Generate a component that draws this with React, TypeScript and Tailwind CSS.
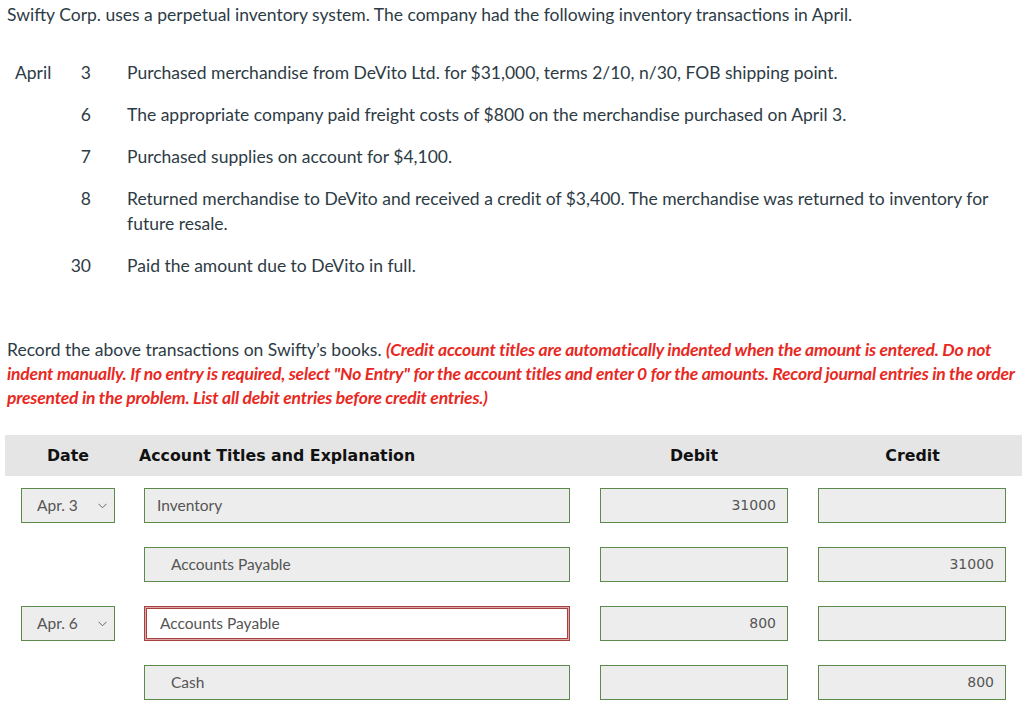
import React from 'react';

const transactions = [
  { day: '3', text: 'Purchased merchandise from DeVito Ltd. for $31,000, terms 2/10, n/30, FOB shipping point.' },
  { day: '6', text: 'The appropriate company paid freight costs of $800 on the merchandise purchased on April 3.' },
  { day: '7', text: 'Purchased supplies on account for $4,100.' },
  {
    day: '8',
    text: 'Returned merchandise to DeVito and received a credit of $3,400. The merchandise was returned to inventory for future resale.',
  },
  { day: '30', text: 'Paid the amount due to DeVito in full.' },
];

type Row = {
  date?: string;
  account: string;
  credit?: boolean;
  error?: boolean;
  debit: string;
  creditAmt: string;
};

const rows: Row[] = [
  { date: 'Apr. 3', account: 'Inventory', debit: '31000', creditAmt: '' },
  { account: 'Accounts Payable', credit: true, debit: '', creditAmt: '31000' },
  { date: 'Apr. 6', account: 'Accounts Payable', error: true, debit: '800', creditAmt: '' },
  { account: 'Cash', credit: true, debit: '', creditAmt: '800' },
];

const Chevron = () => (
  <svg width="9" height="6" viewBox="0 0 9 6" fill="none" stroke="#666" strokeWidth="1">
    <path d="M0.5 0.8 L4.5 4.8 L8.5 0.8" />
  </svg>
);

const AmountBox = ({ value }: { value: string }) => (
  <div className="h-[35px] border border-[#5b8a4c] bg-[#ededed] flex items-center justify-end pr-[11px] font-['DejaVu_Sans',sans-serif] text-[14px] text-[#555]">
    {value}
  </div>
);

export default function App() {
  return (
    <div className="w-[1024px] h-[709px] overflow-hidden bg-white font-['Lato',sans-serif] text-[17.5px] text-[#2d3b45]">
      <p className="pl-[7px] pt-[3px] leading-[24px]">
        Swifty Corp. uses a perpetual inventory system. The company had the following inventory transactions in April.
      </p>

      <div className="mt-[33px] flex flex-col gap-[17px] pr-[20px]">
        {transactions.map((t, i) => (
          <div key={t.day} className="flex leading-[25px]">
            <div className="w-[67px] pl-[15px] shrink-0">{i === 0 ? 'April' : ''}</div>
            <div className="w-[24px] text-right shrink-0">{t.day}</div>
            <div className="pl-[36px]">{t.text}</div>
          </div>
        ))}
      </div>

      <p className="mt-[60px] pl-[7px] pr-[2px] leading-[24px]">
        Record the above transactions on Swifty’s books.{' '}
        <span className="text-[#e8291f] font-bold italic tracking-[-0.2px]">
          (Credit account titles are automatically indented when the amount is entered. Do not indent manually. If no
          entry is required, select "No Entry" for the account titles and enter 0 for the amounts. Record journal
          entries in the order presented in the problem. List all debit entries before credit entries.)
        </span>
      </p>

      <div className="mt-[25px] ml-[5px] w-[1017px]">
        <div className="grid grid-cols-[126px_454px_218px_219px] h-[41px] items-center bg-[#e5e5e5] font-['DejaVu_Sans',sans-serif] font-bold text-[15.8px] text-[#111]">
          <div className="text-center">Date</div>
          <div className="pl-[8px]">Account Titles and Explanation</div>
          <div className="text-center">Debit</div>
          <div className="text-center">Credit</div>
        </div>

        {rows.map((r, i) => (
          <div key={i} className="grid grid-cols-[126px_454px_218px_219px] py-[12px]">
            <div className="px-[16px]">
              {r.date && (
                <div className="h-[35px] border border-[#5b8a4c] bg-[#ededed] flex items-center justify-between pl-[15px] pr-[7px] text-[15.5px] text-[#555]">
                  <span>{r.date}</span>
                  <Chevron />
                </div>
              )}
            </div>
            <div className="pl-[13px] pr-[15px]">
              {r.error ? (
                <div className="h-[35px] border border-[#a5413f] bg-[#dcaaaa] p-px">
                  <div className="h-full border border-[#a5413f] bg-white flex items-center pl-[13px] text-[15.5px] text-[#555]">
                    {r.account}
                  </div>
                </div>
              ) : (
                <div
                  className={`h-[35px] border border-[#5b8a4c] bg-[#ededed] flex items-center text-[15.5px] text-[#555] ${
                    r.credit ? 'pl-[26px]' : 'pl-[12px]'
                  }`}
                >
                  {r.account}
                </div>
              )}
            </div>
            <div className="px-[15px]">
              <AmountBox value={r.debit} />
            </div>
            <div className="pl-[15px] pr-[16px]">
              <AmountBox value={r.creditAmt} />
            </div>
          </div>
        ))}
      </div>
    </div>
  );
}
